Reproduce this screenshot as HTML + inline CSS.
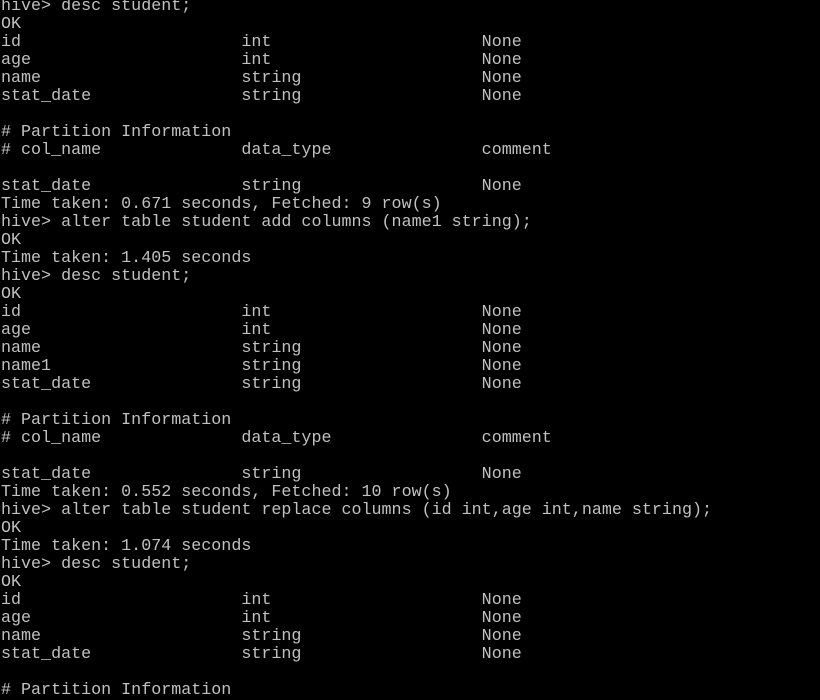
<!DOCTYPE html>
<html><head><meta charset="utf-8"><style>
html,body{margin:0;padding:0;background:#000;width:820px;height:699px;overflow:hidden}
pre{margin:0;position:absolute;left:1px;top:-2px;font-family:"Liberation Mono",monospace;font-size:16.7px;line-height:18px;color:#c0c0c0;white-space:pre}
</style></head><body><pre>hive&gt; desc student;
OK
id                      int                     None
age                     int                     None
name                    string                  None
stat_date               string                  None

# Partition Information
# col_name              data_type               comment

stat_date               string                  None
Time taken: 0.671 seconds, Fetched: 9 row(s)
hive&gt; alter table student add columns (name1 string);
OK
Time taken: 1.405 seconds
hive&gt; desc student;
OK
id                      int                     None
age                     int                     None
name                    string                  None
name1                   string                  None
stat_date               string                  None

# Partition Information
# col_name              data_type               comment

stat_date               string                  None
Time taken: 0.552 seconds, Fetched: 10 row(s)
hive&gt; alter table student replace columns (id int,age int,name string);
OK
Time taken: 1.074 seconds
hive&gt; desc student;
OK
id                      int                     None
age                     int                     None
name                    string                  None
stat_date               string                  None

# Partition Information</pre></body></html>
